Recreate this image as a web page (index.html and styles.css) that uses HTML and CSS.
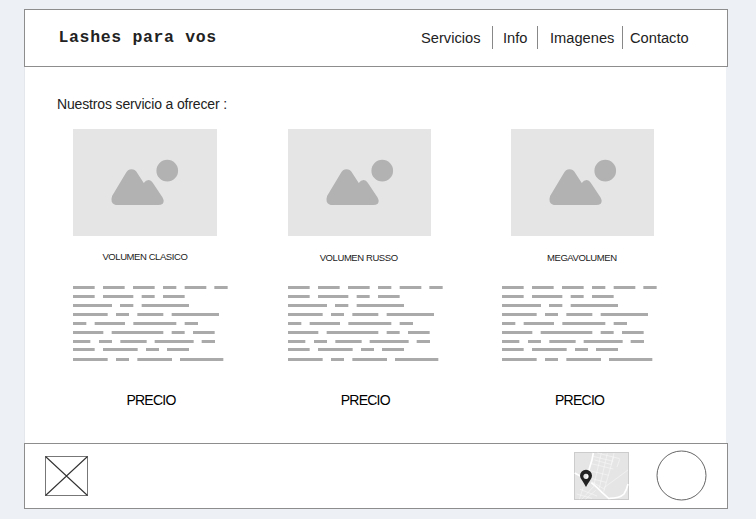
FILE: index.html
```html
<!DOCTYPE html>
<html lang="es">
<head>
<meta charset="utf-8">
<title>Lashes para vos</title>
<link rel="stylesheet" href="styles.css">
</head>
<body>
<svg class="defs" aria-hidden="true">
  <symbol id="photo" viewBox="0 0 430 321">
    <path class="shape" d="M117 201L157 134Q164 121 175 121Q187 121 194 134L212 162Q218 153 227 153Q234 153 239 161L268 205Q275 217 269 224Q264 228 255 228H135Q120 228 116 218Q114 210 117 201Z"/>
    <circle class="shape" cx="282.500" cy="125" r="32.500"/>
  </symbol>
  <symbol id="lines" viewBox="0 0 465 225">
    <path class="dash" d="M0 4.500h65m25 0h65m25 0h65m25 0h40m25 0h65m24 0h40
      M0 31.500h65m25 0h91m25 0h39m25 0h65
      M0 58.500h117m24 0h40m25 0h142
      M0 85.500h104m25 0h39m25 0h78m25 0h142
      M0 112.500h40m25 0h91m25 0h129m25 0h40
      M0 139.500h91m25 0h155m25 0h39m25 0h65
      M0 166.500h52m26 0h39m25 0h79m24 0h117m24 0h40
      M0 190.500h65m25 0h104m25 0h39m24 0h66
      M0 220.500h104m25 0h39m25 0h104m24 0h130"/>
  </symbol>
</svg>
<div class="page">
  <header class="header">
    <h1 class="brand">Lashes para vos</h1>
    <nav class="nav">
      <a class="link servicios">Servicios</a>
      <a class="link info">Info</a>
      <a class="link imagenes">Imagenes</a>
      <a class="link contacto">Contacto</a>
    </nav>
  </header>
  <main class="main">
    <h2 class="intro">Nuestros servicio a ofrecer :</h2>
    <div class="cards">
      <article class="card">
        <svg class="photo"><use href="#photo"/></svg>
        <h3 class="name clasico">VOLUMEN CLASICO</h3>
        <svg class="lines"><use href="#lines"/></svg>
        <p class="price">PRECIO</p>
      </article>
      <article class="card">
        <svg class="photo"><use href="#photo"/></svg>
        <h3 class="name russo">VOLUMEN RUSSO</h3>
        <svg class="lines"><use href="#lines"/></svg>
        <p class="price">PRECIO</p>
      </article>
      <article class="card">
        <svg class="photo shifted"><use href="#photo"/></svg>
        <h3 class="name mega">MEGAVOLUMEN</h3>
        <svg class="lines"><use href="#lines"/></svg>
        <p class="price">PRECIO</p>
      </article>
    </div>
  </main>
  <footer class="footer">
    <svg class="logo" viewBox="0 0 44 41">
      <rect class="frame" x="0.500" y="0.500" width="42" height="39"/>
      <path class="cross" d="M.500 .500L42.500 39.500M42.500 .500L.500 39.500"/>
    </svg>
    <svg class="map" viewBox="0 0 165 144">
      <rect class="land" x="1.500" y="1.500" width="162" height="141"/>
      <g class="streets">
        <path class="road" d="M58 3Q54 28 48 43Q42 62 39 82M2 63L20 73M52 92Q68 105 84 121L106 141M106 139Q137 139 150 126Q158 114 162 96"/>
        <path class="street" d="M57 13L118 28M52 35L118 51M47 56L104 70M43 77L96 91M82 3L60 98M100 4L76 108M119 14L89 119M70 3L137 20M62 24L113 38M162 54L90 107M53 89L92 112M137 22L129 45M120 3L112 37M23 142L64 98M34 142L65 115M8 126L54 139M18 112L69 132M28 105L16 142"/>
      </g>
      <path class="pin" fill-rule="evenodd" d="M36 105Q32 97 25 86Q18 78 18 71A18 18 0 0 1 54 71Q54 79 47 87Q40 97 36 105ZM36 65a8 8 0 1 0 .010 0Z"/>
    </svg>
    <svg class="avatar" viewBox="0 0 51 51"><circle class="ring" cx="25.500" cy="25.500" r="24.500"/></svg>
  </footer>
</div>
</body>
</html>
```
FILE: styles.css
```css
* { box-sizing: border-box; }
body {
  margin: 0;
  padding: 9px 0 0 24px;
  height: 519px;
  overflow: hidden;
  background: #edf1f6;
  color: #222;
  font-family: "Liberation Sans", Arial, sans-serif;
}
h1, h2, h3, p { margin: 0; font-weight: normal; white-space: nowrap; }
svg { display: block; }
.defs { position: absolute; width: 0; height: 0; }
.page { width: 704px; }
.header {
  display: flex;
  justify-content: space-between;
  height: 58px;
  padding: 0 1px 0 33.500px;
  border: 1px solid #8d8d8d;
  background: #fff;
}
.brand {
  padding-top: 18px;
  font: bold 16.500px/20px "Liberation Mono", "Courier New", monospace;
  letter-spacing: .660px;
}
.nav { display: flex; width: 305px; padding-top: 16px; }
.link {
  height: 23px;
  font-size: 14.670px;
  line-height: 24px;
  white-space: nowrap;
}
.servicios { width: 72px; border-right: 1px solid #888; }
.info { width: 45px; padding-left: 10px; border-right: 1px solid #888; }
.imagenes { width: 85px; padding-left: 12px; border-right: 1px solid #888; }
.contacto { padding-left: 7px; }
.main {
  width: 702px;
  height: 376px;
  padding: 28px 0 0 33px;
  background: #fff;
  border-left: 1px solid #e4e7ec;
}
.intro { margin-left: -1px; height: 34px; font-size: 14px; line-height: 18px; letter-spacing: -.150px; }
.cards { display: grid; grid-template-columns: repeat(3, 214.300px); padding-left: 15.400px; }
.photo { width: 143.500px; height: 107px; background: #e5e5e5; }
.shifted { margin-left: 9px; }
.shape { fill: #b2b2b2; }
.name { margin-top: 15px; height: 35px; font-size: 9.500px; line-height: 12px; letter-spacing: -.420px; }
.clasico { padding-left: 29px; }
.russo { margin-top: 16px; height: 34px; padding-left: 32px; }
.mega { margin-top: 16px; height: 34px; padding-left: 45px; }
.lines { width: 155px; height: 75px; }
.dash { fill: none; stroke: #aaa; stroke-width: 9; }
.price { margin: 31px 0 0 53px; color: #000; font-size: 14px; line-height: 17px; letter-spacing: -.750px; }
.footer {
  display: flex;
  align-items: flex-start;
  height: 66px;
  padding: 0 0 0 20px;
  border: 1px solid #8d8d8d;
  background: #fff;
}
.logo { width: 44px; height: 41px; margin-top: 12px; }
.frame { fill: none; stroke: #777; stroke-width: 1; }
.cross { fill: none; stroke: #333; stroke-width: 1.100; }
.map { width: 55px; height: 48px; margin: 8px 0 0 485px; }
.land { fill: #e5e5e5; stroke: #ccc; stroke-width: 3; }
.road { fill: none; stroke: #fff; stroke-width: 5; }
.street { fill: none; stroke: #fafafa; stroke-width: 1.500; }
.pin { fill: #222; }
.avatar { width: 51px; height: 51px; margin: 6px 0 0 27px; }
.ring { fill: none; stroke: #666; stroke-width: 1; }
```
